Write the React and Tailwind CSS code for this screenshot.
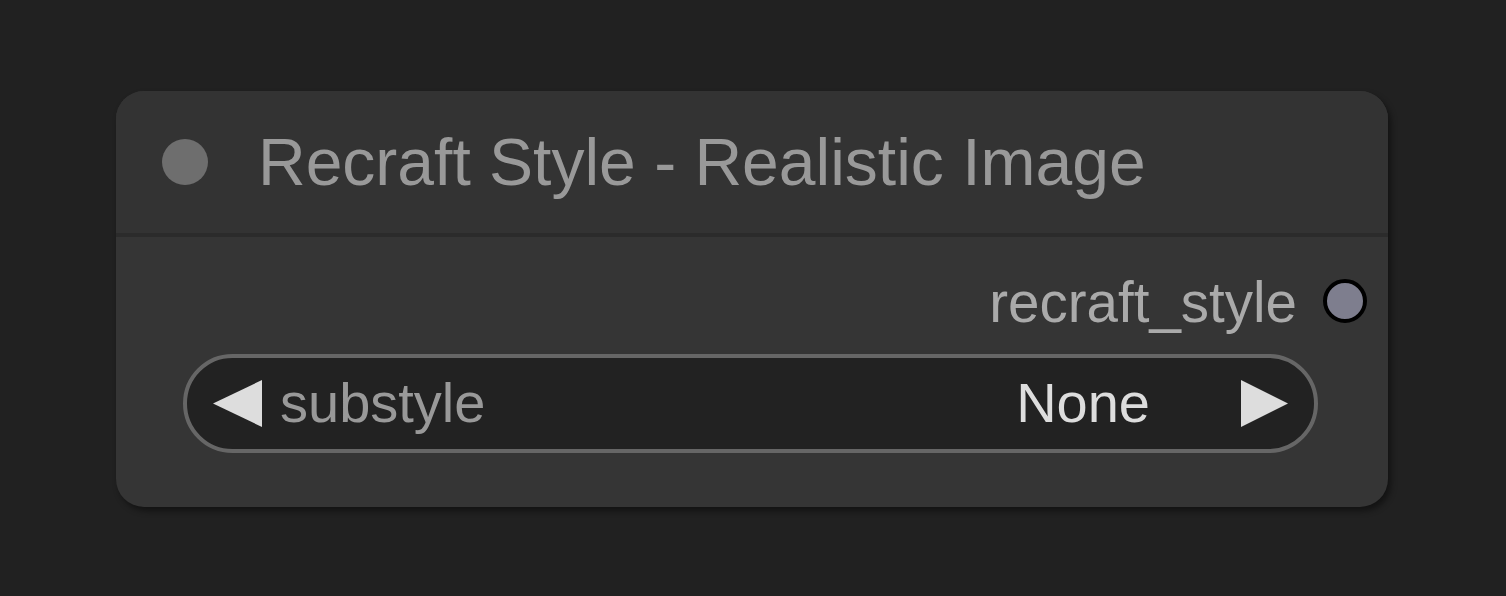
export default function App() {
  return (
    <div
      className="w-[1506px] h-[596px] bg-[#212121] pl-[116px] pt-[91px]"
      style={{ fontFamily: '"Liberation Sans", Arial, sans-serif' }}
    >
      <div className="w-[1272px] h-[416px] rounded-[28px] bg-[#353535] overflow-hidden shadow-[3px_4px_6px_rgba(0,0,0,0.45)] flex flex-col">
        {/* Title bar */}
        <div className="h-[142px] bg-[#333333] flex items-center pl-[46px] gap-[50px]">
          <div className="w-[46px] h-[46px] rounded-full bg-[#6e6e6e]" />
          <span className="text-[66px] leading-none text-[#999999]">Recraft Style - Realistic Image</span>
        </div>
        <div className="h-[4px] bg-[#2b2b2b]" />

        {/* Body */}
        <div className="flex-1 flex flex-col pt-[33px]">
          <div className="flex items-center justify-end pr-[21px] gap-[26px]">
            <span className="text-[56.5px] leading-none text-[#aaaaaa] pt-[5px]">recraft_style</span>
            <div className="w-[44px] h-[44px] rounded-full bg-[#7e7e8e] border-[4px] border-black" />
          </div>

          <div className="mt-[22px] ml-[67px] mr-[70px] h-[99px] rounded-full border-[4px] border-[#666666] bg-[#222222] flex items-center pl-[26px] pr-[26px]">
            <svg width="49" height="47" viewBox="0 0 49 47">
              <path d="M0 23.5 L49 0 L49 47 Z" fill="#dddddd" />
            </svg>
            <span className="ml-[18px] text-[56px] leading-none text-[#999999]">substyle</span>
            <span className="ml-auto text-[56px] leading-none text-[#dddddd]">None</span>
            <svg width="47" height="47" viewBox="0 0 47 47" className="ml-[91px]">
              <path d="M47 23.5 L0 0 L0 47 Z" fill="#dddddd" />
            </svg>
          </div>
        </div>
      </div>
    </div>
  );
}
